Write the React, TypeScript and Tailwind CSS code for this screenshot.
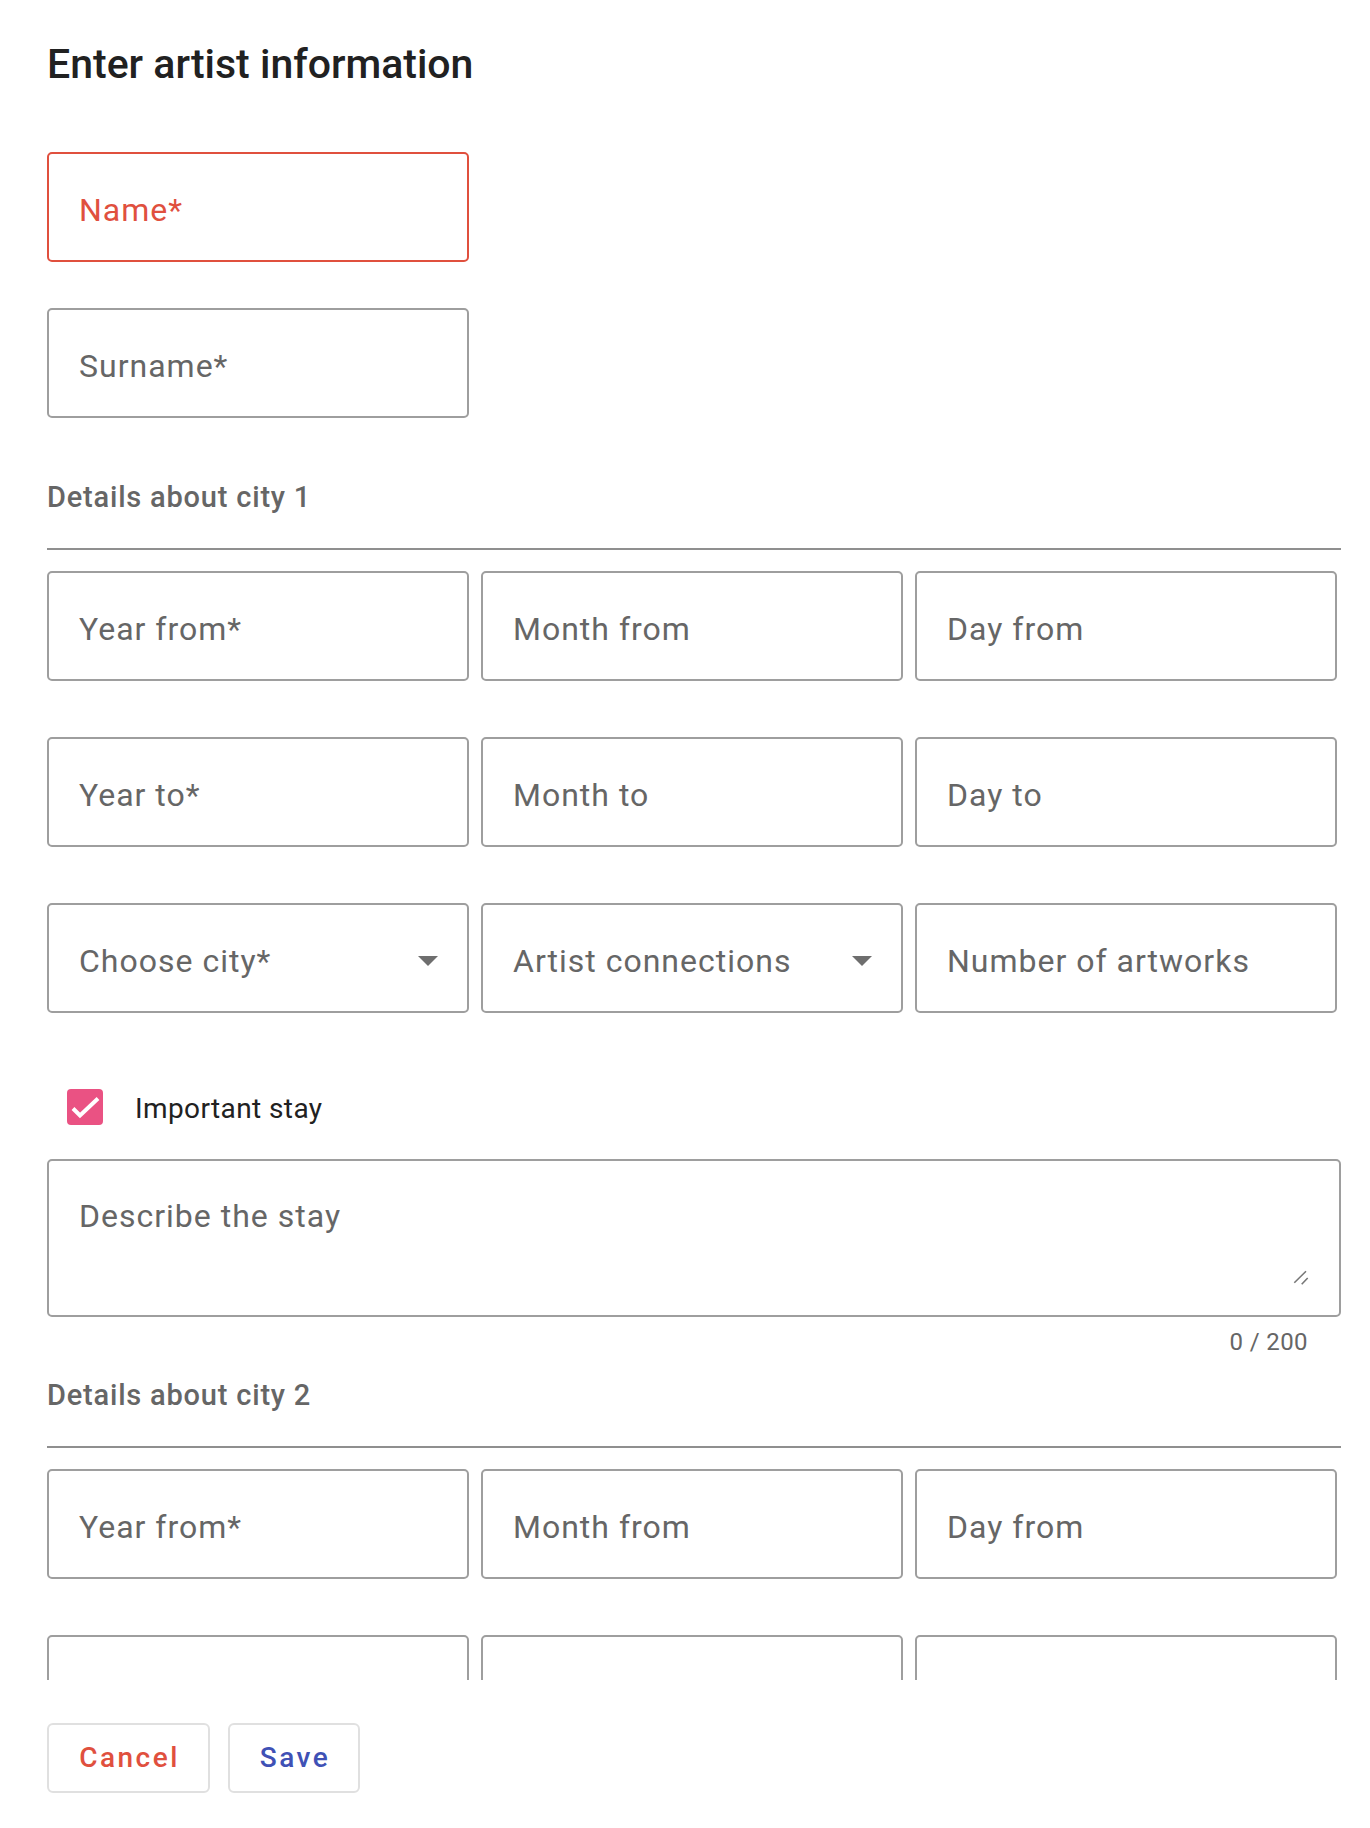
import React from 'react';

type FieldProps = {
  label: string;
  error?: boolean;
  select?: boolean;
};

const Field: React.FC<FieldProps> = ({ label, error, select }) => (
  <div
    className={`flex h-[110px] items-start justify-between rounded-[5px] border-2 pl-[30px] pr-[29px] pt-[40px] ${
      error ? 'border-[#e0503e]' : 'border-[#9e9e9e]'
    }`}
  >
    <span
      className={`whitespace-nowrap text-[32px] leading-none tracking-[1px] ${
        error ? 'text-[#e0503e]' : 'text-[#666666]'
      }`}
    >
      {label}
    </span>
    {select && (
      <span className="mt-[11px] h-0 w-0 border-x-[10px] border-t-[10px] border-x-transparent border-t-[#6e6e6e]" />
    )}
  </div>
);

const CitySection: React.FC<{ index: number }> = ({ index }) => (
  <section>
    <h3 className="text-[29px] font-medium leading-none tracking-[0.8px] text-[#666666]">
      Details about city {index}
    </h3>
    <div className="mt-[36px] h-[2px] bg-[#8f8f8f]" />

    <div className="mt-[21px] flex flex-col gap-[56px]">
      <div className="grid grid-cols-[422px_422px_422px] gap-x-[12px]">
        <Field label="Year from*" />
        <Field label="Month from" />
        <Field label="Day from" />
      </div>
      <div className="grid grid-cols-[422px_422px_422px] gap-x-[12px]">
        <Field label="Year to*" />
        <Field label="Month to" />
        <Field label="Day to" />
      </div>
      <div className="grid grid-cols-[422px_422px_422px] gap-x-[12px]">
        <Field label="Choose city*" select />
        <Field label="Artist connections" select />
        <Field label="Number of artworks" />
      </div>
    </div>

    <label className="ml-[20px] mt-[76px] flex items-center gap-[32px]">
      <span className="flex h-[36px] w-[36px] items-center justify-center rounded-[4px] bg-[#ea5283]">
        <svg width="36" height="36" viewBox="0 0 36 36" fill="none">
          <path d="M6 19.5L13 26.5L31 9.5" stroke="white" strokeWidth="4" />
        </svg>
      </span>
      <span className="pt-[3px] text-[28px] leading-none tracking-[0.4px] text-[#212121]">Important stay</span>
    </label>

    <div className="relative mt-[34px] h-[158px] rounded-[5px] border-2 border-[#9e9e9e] pl-[30px] pt-[39px]">
      <span className="text-[32px] leading-none tracking-[1px] text-[#666666]">Describe the stay</span>
      <svg
        className="absolute bottom-[29px] right-[30px]"
        width="16"
        height="16"
        viewBox="0 0 16 16"
        fill="none"
      >
        <path d="M1.3 12.7L13 1.3M8.7 14.3L14.7 8" stroke="#777777" strokeWidth="1.6" />
      </svg>
    </div>
    <div className="mt-[13px] pr-[33px] text-right text-[24px] leading-none tracking-[0.4px] text-[#666666]">
      0 / 200
    </div>
  </section>
);

const App: React.FC = () => {
  return (
    <div className="h-[1828px] bg-white font-['Roboto',sans-serif]">
      {/* Scrollable form body */}
      <div className="h-[1680px] overflow-hidden pl-[47px] pr-[29px] pt-[44px]">
        <h2 className="text-[41px] font-medium leading-none text-[#212121]">Enter artist information</h2>

        <div className="mt-[67px] w-[422px]">
          <Field label="Name*" error />
        </div>
        <div className="mt-[46px] w-[422px]">
          <Field label="Surname*" />
        </div>

        <div className="mt-[65px]">
          <CitySection index={1} />
        </div>
        <div className="mt-[27px]">
          <CitySection index={2} />
        </div>
      </div>

      {/* Actions */}
      <div className="mt-[43px] flex gap-[18px] pl-[47px]">
        <button className="flex h-[70px] w-[163px] items-center justify-center rounded-[6px] border-2 border-[#e0e0e0] bg-white pl-[2px] text-[28px] font-medium leading-none tracking-[2.5px] text-[#e0503e]">
          Cancel
        </button>
        <button className="flex h-[70px] w-[132px] items-center justify-center rounded-[6px] border-2 border-[#e0e0e0] bg-white pl-[2px] text-[28px] font-medium leading-none tracking-[2.5px] text-[#3f51b5]">
          Save
        </button>
      </div>
    </div>
  );
};

export default App;
